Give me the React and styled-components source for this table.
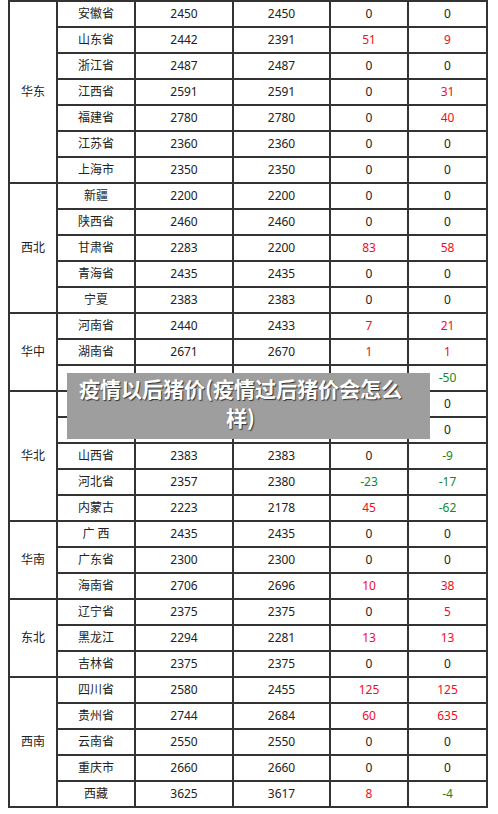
import React from 'react';
import styled, { createGlobalStyle } from 'styled-components';

const GlobalStyle = createGlobalStyle`
  html, body {
    margin: 0;
    padding: 0;
    background: #fff;
  }
  body {
    font-family: "Noto Sans", "Noto Sans CJK SC", sans-serif;
  }
`;

const Page = styled.div`
  position: relative;
  width: 498px;
  height: 814px;
  overflow: hidden;
  padding-left: 8px;
  box-sizing: border-box;
`;

const Table = styled.table`
  border-collapse: collapse;
  table-layout: fixed;
  width: 480px;
  font-size: 12px;
  color: #222;
`;

const Col = styled.col`
  width: ${(p) => p.$w}px;
`;

const Cell = styled.td`
  border: 2px solid #333;
  height: 24px;
  padding: 0;
  text-align: center;
  vertical-align: middle;
  line-height: 16px;
  white-space: nowrap;
  color: ${(p) => (p.$tone === 'up' ? '#f40b1e' : p.$tone === 'down' ? '#0f8a1f' : '#222')};
`;

const Overlay = styled.div`
  position: absolute;
  left: 67px;
  top: 373px;
  width: 363px;
  box-sizing: border-box;
  padding: 1px 24px 7px 8px;
  background: #9e9e9e;
  color: #fff;
  font-family: "Noto Sans CJK SC", sans-serif;
  font-weight: 700;
  font-size: 21px;
  line-height: 29px;
  text-align: center;
  text-shadow: 1px 1px 1px #333;
`;

const widths = [48, 78, 98, 97, 78, 79];

// rows hidden under the title box keep empty cells, only the last column shows
const regions = [
  {
    name: '华东',
    rows: [
      ['安徽省', 2450, 2450, 0, 0],
      ['山东省', 2442, 2391, 51, 9],
      ['浙江省', 2487, 2487, 0, 0],
      ['江西省', 2591, 2591, 0, 31],
      ['福建省', 2780, 2780, 0, 40],
      ['江苏省', 2360, 2360, 0, 0],
      ['上海市', 2350, 2350, 0, 0],
    ],
  },
  {
    name: '西北',
    rows: [
      ['新疆', 2200, 2200, 0, 0],
      ['陕西省', 2460, 2460, 0, 0],
      ['甘肃省', 2283, 2200, 83, 58],
      ['青海省', 2435, 2435, 0, 0],
      ['宁夏', 2383, 2383, 0, 0],
    ],
  },
  {
    name: '华中',
    rows: [
      ['河南省', 2440, 2433, 7, 21],
      ['湖南省', 2671, 2670, 1, 1],
      ['', '', '', '', -50],
    ],
  },
  {
    name: '华北',
    rows: [
      ['', '', '', '', 0],
      ['', '', '', '', 0],
      ['山西省', 2383, 2383, 0, -9],
      ['河北省', 2357, 2380, -23, -17],
      ['内蒙古', 2223, 2178, 45, -62],
    ],
  },
  {
    name: '华南',
    rows: [
      ['广 西', 2435, 2435, 0, 0],
      ['广东省', 2300, 2300, 0, 0],
      ['海南省', 2706, 2696, 10, 38],
    ],
  },
  {
    name: '东北',
    rows: [
      ['辽宁省', 2375, 2375, 0, 5],
      ['黑龙江', 2294, 2281, 13, 13],
      ['吉林省', 2375, 2375, 0, 0],
    ],
  },
  {
    name: '西南',
    rows: [
      ['四川省', 2580, 2455, 125, 125],
      ['贵州省', 2744, 2684, 60, 635],
      ['云南省', 2550, 2550, 0, 0],
      ['重庆市', 2660, 2660, 0, 0],
      ['西藏', 3625, 3617, 8, -4],
    ],
  },
];

const tone = (v) => (typeof v !== 'number' ? undefined : v > 0 ? 'up' : v < 0 ? 'down' : undefined);

const App = () => (
  <>
    <GlobalStyle />
    <Page>
      <Table>
        <colgroup>
          {widths.map((w, i) => (
            <Col key={i} $w={w} />
          ))}
        </colgroup>
        <tbody>
          {regions.map((region) =>
            region.rows.map(([prov, a, b, d1, d2], i) => (
              <tr key={region.name + i}>
                {i === 0 && <Cell rowSpan={region.rows.length}>{region.name}</Cell>}
                <Cell>{prov}</Cell>
                <Cell>{a}</Cell>
                <Cell>{b}</Cell>
                <Cell $tone={tone(d1)}>{d1}</Cell>
                <Cell $tone={tone(d2)}>{d2}</Cell>
              </tr>
            ))
          )}
        </tbody>
      </Table>
      <Overlay>疫情以后猪价(疫情过后猪价会怎么样)</Overlay>
    </Page>
  </>
);

export default App;
